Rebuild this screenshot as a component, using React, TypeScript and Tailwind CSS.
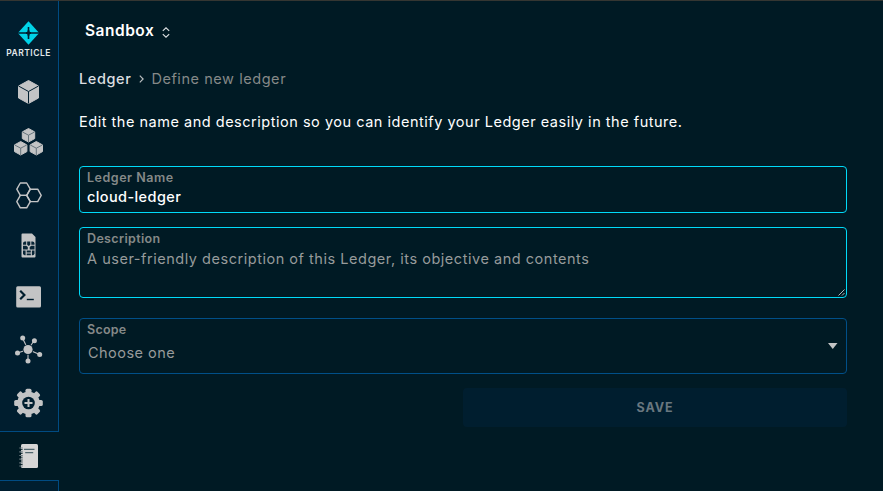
import React from "react";

const Svg = ({ w, h, children }: { w: number; h: number; children: React.ReactNode }) => (
  <svg width={w} height={h} viewBox={`0 0 ${w} ${h}`} fill="#c3c4c5" className="block shrink-0">
    {children}
  </svg>
);

const Logo = () => (
  <Svg w={22} h={24}>
    <path d="M10.5 0.3 L21.2 12 L10.5 23.7 L-0.2 12Z" fill="#00d3e8" />
    <path d="M10.5 6V18M0 12H22" stroke="#001e2f" strokeWidth="1.6" />
    <path d="M10.5 9.5V14.5M8 12h5" stroke="#001e2f" strokeWidth="2.2" />
  </Svg>
);

const Cube = () => (
  <Svg w={22} h={24}>
    <path d="M10.5 0.5 L20.5 6 V18 L10.5 23.5 L0.5 18 V6Z" stroke="#c3c4c5" strokeWidth="1" strokeLinejoin="round" />
    <path d="M0.5 6 L10.5 11.5 L20.5 6 M10.5 11.5V23.5" fill="none" stroke="#001e2f" strokeWidth="1" />
  </Svg>
);

const SmallCube = ({ x, y }: { x: number; y: number }) => (
  <g transform={`translate(${x} ${y})`}>
    <path d="M7 0.5 L13.2 3.9 V10.6 L7 14 L0.8 10.6 V3.9Z" stroke="#c3c4c5" strokeWidth="1" strokeLinejoin="round" />
    <path d="M1 4 L7 7.2 L13 4 M7 7.2V14" fill="none" stroke="#5b6b74" strokeWidth="0.9" />
  </g>
);

const Cubes = () => (
  <Svg w={30} h={28}>
    <SmallCube x={7.5} y={0} />
    <SmallCube x={-0.3} y={13} />
    <SmallCube x={15.3} y={13} />
  </Svg>
);

const Hexes = () => (
  <Svg w={26} h={27}>
    <g fill="none" stroke="#c3c4c5" strokeWidth="1.4" strokeLinejoin="round">
      <path d="M4.3 1h6.4L14.3 7.2L10.7 13.4H4.3L0.8 7.2Z" />
      <path d="M4.3 13.4h6.4L14.3 19.6L10.7 25.8H4.3L0.8 19.6Z" />
      <path d="M14.3 7.2h7.4L25.2 13.4L21.7 19.6H14.3L10.7 13.4Z" />
    </g>
  </Svg>
);

const Sim = () => (
  <Svg w={16} h={25}>
    <path d="M1.5 0.5H11L14.5 4V23.5a1 1 0 0 1-1 1H1.5a1 1 0 0 1-1-1V1.5a1 1 0 0 1 1-1Z" />
    <g fill="#082536">
      <path d="M4 8.5h1.2v3.2H2V10.5a2 2 0 0 1 2-2Z" />
      <path d="M6.2 8.5h3.1v3.2L7.7 13L6.2 11.7Z" />
      <path d="M10.3 8.5h1.2a2 2 0 0 1 2 2v1.2h-3.2Z" />
      <path d="M2 12.8h3.2l1.6 1.3v2.4H2Z" />
      <path d="M13.5 12.8h-3.2l-1.6 1.3v2.4h4.8Z" />
      <path d="M2 17.6h2.6v4.6H4a2 2 0 0 1-2-2Z" />
      <path d="M5.7 17.6h4.1v1.8H5.7ZM5.7 20.4h4.1v1.8H5.7Z" />
      <path d="M10.9 17.6h2.6v2.6a2 2 0 0 1-2 2h-.6Z" />
    </g>
  </Svg>
);

const Terminal = () => (
  <Svg w={26} h={22}>
    <rect x="0.2" y="0.3" width="24.8" height="21.2" rx="1.5" />
    <path d="M4.2 4.8L8.4 9L4.2 13.2" fill="none" stroke="#001e2f" strokeWidth="2.2" />
    <path d="M10.8 13.5h7" stroke="#001e2f" strokeWidth="1.4" />
  </Svg>
);

const Network = () => (
  <Svg w={28} h={29}>
    <path d="M13 14.5L7.5 3M13 14.5L19.2 5.5M13 14.5L2.5 18M13 14.5L24.7 19.5M13 14.5V26" stroke="#c3c4c5" strokeWidth="1.1" />
    <circle cx="13" cy="14.5" r="5.3" fill="#001e2f" />
    <circle cx="13" cy="14.5" r="4.6" />
    <circle cx="7.7" cy="3" r="2.5" />
    <circle cx="19.4" cy="5.8" r="2.5" />
    <circle cx="2.5" cy="18" r="2.5" />
    <circle cx="24.7" cy="19.5" r="2.5" />
    <circle cx="13" cy="26" r="2.5" />
  </Svg>
);

const Gear = () => (
  <Svg w={30} h={30}>
    <circle cx="14.5" cy="15" r="11.2" />
    {[0, 45, 90, 135].map((a) => (
      <rect key={a} x="11.5" y="0.7" width="6" height="28.6" rx="1.6" transform={`rotate(${a} 14.5 15)`} />
    ))}
    <circle cx="14.5" cy="15" r="6.3" fill="#001e2f" />
    <path d="M14.5 11v8M10.5 15h8" stroke="#c3c4c5" strokeWidth="2" />
  </Svg>
);

const Notebook = () => (
  <Svg w={20} h={24}>
    <rect x="2" y="0" width="17" height="24" rx="1.5" fill="#d6d6d6" />
    <path d="M0.3 4h3.5M0.3 7.8h3.5M0.3 11.5h3.5M0.3 15.2h3.5M0.3 18.8h3.5M0.3 22h3.5" stroke="#6f7c81" strokeWidth="1.2" />
    <path d="M2 5.6h1.6M2 9.4h1.6M2 13.2h1.6M2 17h1.6M2 20.5h1.6" stroke="#10282f" strokeWidth="1" />
    <path d="M5 5.3h10.5M6.2 8.7h8" stroke="#4f666d" strokeWidth="1.2" />
  </Svg>
);

const Slot = ({ h, children }: { h: string; children: React.ReactNode }) => (
  <a className={`flex w-[58px] shrink-0 items-center justify-center ${h}`}>{children}</a>
);

export default function App() {
  return (
    <div className="flex h-[491px] w-[883px] flex-col overflow-hidden border-t border-[#353632] bg-[#001a24] font-['Inter',sans-serif] text-white">
      <div className="flex min-h-0 flex-1">
        <nav className="flex w-[59px] shrink-0 flex-col">
          <div className="flex h-[430px] flex-col border-r border-[#004b82] bg-[#001e2f]">
            <div className="flex h-[67px] w-[58px] flex-col items-center pt-[20px]">
              <Logo />
              <span className="mt-[3px] mr-px text-[8.5px] leading-[10px] font-semibold tracking-[0.5px] text-[#e4e8ea]">PARTICLE</span>
            </div>
            <Slot h="h-[48px]"><Cube /></Slot>
            <Slot h="h-[51px]"><Cubes /></Slot>
            <Slot h="h-[56px]"><Hexes /></Slot>
            <Slot h="h-[45px]"><Sim /></Slot>
            <Slot h="h-[57px]"><Terminal /></Slot>
            <Slot h="h-[49px]"><Network /></Slot>
            <Slot h="h-[57px]"><Gear /></Slot>
          </div>
          <div className="flex h-[50px] w-[59px] border-y border-[#004b82]">
            <Slot h="h-[48px]"><Notebook /></Slot>
          </div>
          <div className="flex-1 border-r border-[#004b82] bg-[#001e2f]" />
        </nav>

        <main className="flex w-[788px] flex-col pl-[20px]">
          <div className="mt-[18px] flex h-6 items-center pl-[6px]">
            <span className="text-[15.5px] leading-6 font-semibold tracking-[0.5px]">Sandbox</span>
            <svg width="8" height="11" viewBox="0 0 8 11" className="mt-[2px] ml-[8px]" fill="none" stroke="#e0e4e6" strokeWidth="1.1">
              <path d="M0.8 3.8L4 0.8L7.2 3.8M0.8 7.2L4 10.2L7.2 7.2" />
            </svg>
          </div>

          <div className="mt-[26px] flex h-5 items-center text-[14.5px] leading-5">
            <span className="font-medium tracking-[0.6px] text-[#dcdfe0]">Ledger</span>
            <svg width="5" height="8" viewBox="0 0 5 8" className="mr-[7px] ml-[8px]" fill="none" stroke="#b9bebf" strokeWidth="1.2">
              <path d="M0.8 0.7L4.1 4L0.8 7.3" />
            </svg>
            <span className="tracking-[0.56px] text-[#858988]">Define new ledger</span>
          </div>

          <p className="mt-[23px] h-5 text-[14.5px] leading-5 whitespace-nowrap tracking-[0.52px]">
            Edit the name and description so you can identify your Ledger easily in the future.
          </p>

          <div className="mt-[34px] flex h-[47px] w-[768px] flex-col rounded-[4px] border border-[#00daf8] px-[7px] pt-[3px]">
            <label className="text-[12.5px] leading-4 font-semibold tracking-[0.52px] text-[#858988]">Ledger Name</label>
            <span className="mt-[1px] text-[14.5px] leading-5 font-medium tracking-[0.4px]">cloud-ledger</span>
          </div>

          <div className="relative mt-[14px] flex h-[71px] w-[768px] flex-col rounded-[4px] border border-[#00daf8] px-[7px] pt-[3px]">
            <label className="text-[12.5px] leading-4 font-semibold tracking-[0.35px] text-[#858988]">Description</label>
            <span className="mt-[2px] text-[14.5px] leading-5 tracking-[0.53px] text-[#979b9b]">
              A user-friendly description of this Ledger, its objective and contents
            </span>
            <svg width="7" height="7" viewBox="0 0 7 7" className="absolute right-px bottom-px" stroke="#c3c8ca" strokeWidth="0.9">
              <path d="M0.5 6.5L6.5 0.5M4 6.5L6.5 4" />
            </svg>
          </div>

          <div className="mt-[20px] flex h-[56px] w-[768px] items-start justify-between rounded-[4px] border border-[#004f88] px-[7px] pt-[3px]">
            <div className="flex flex-col">
              <label className="text-[12.5px] leading-4 font-semibold tracking-[0.25px] text-[#858988]">Scope</label>
              <span className="mt-[5px] pl-px text-[14.5px] leading-5 tracking-[0.47px] text-[#979b9b]">Choose one</span>
            </div>
            <svg width="10" height="6" viewBox="0 0 10 6" className="mt-[21px] mr-px" fill="#c3c4c5">
              <path d="M0 0H9.5L4.75 6Z" />
            </svg>
          </div>

          <button className="mt-[14px] ml-auto flex h-[39px] w-[384px] items-center justify-center rounded-[4px] bg-[#001e2f] pt-px text-[12.5px] font-bold tracking-[0.9px] text-[#69777f]">
            SAVE
          </button>
        </main>
      </div>
    </div>
  );
}
